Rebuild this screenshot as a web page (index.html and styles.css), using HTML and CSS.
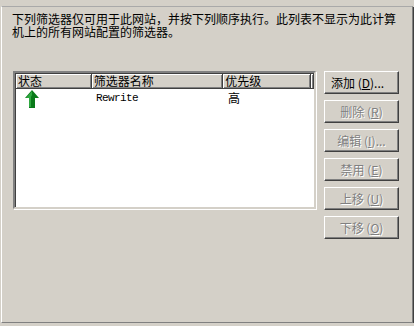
FILE: index.html
```html
<!DOCTYPE html>
<html lang="zh-CN">
<head>
    <meta charset="UTF-8">
    <title>ISAPI 筛选器</title>
    <link rel="stylesheet" href="styles.css">
</head>
<body>
    <div class="page">
        <p class="intro">下列筛选器仅可用于此网站，并按下列顺序执行。此列表不显示为此计算机上的所有网站配置的筛选器。</p>
        <div class="main">
            <div class="list">
                <div class="head">
                    <div class="col c1">状态</div>
                    <div class="col c2">筛选器名称</div>
                    <div class="col c3">优先级</div>
                    <div class="col c4"></div>
                </div>
                <div class="row">
                    <div class="cell c1">
                        <svg class="arrow" width="14" height="18" viewBox="0 0 14 18">
                            <path d="M7 0 L14 8 L10 8 L10 18 L4 18 L4 8 L0 8 Z" fill="#0a7a1a"/>
                            <path d="M7 1 L1 8 L4 8 L4 17 L6 17 L6 7 L7 5 Z" fill="#2fa840"/>
                        </svg>
                    </div>
                    <div class="cell c2 mono">Rewrite</div>
                    <div class="cell c3">高</div>
                </div>
            </div>
            <div class="buttons">
                <button class="btn">添加 (<u>D</u>)...</button>
                <button class="btn off">删除 (<u>R</u>)</button>
                <button class="btn off">编辑 (<u>I</u>)...</button>
                <button class="btn off">禁用 (<u>E</u>)</button>
                <button class="btn off">上移 (<u>U</u>)</button>
                <button class="btn off">下移 (<u>O</u>)</button>
            </div>
        </div>
    </div>
</body>
</html>
```

FILE: styles.css
```css
body {
    margin: 0;
    padding: 0;
    background: #d4d0c8;
    font-family: "Noto Sans CJK SC", sans-serif;
    font-size: 12px;
    color: #000;
}

.page {
    margin: 6px 0 0 1px;
    width: 410px;
    height: 315px;
    border: 1px solid;
    border-color: #a9a9a9 #808080 #808080 #ffffff;
    box-shadow: 1px 1px 0 #404040;
}

.intro {
    margin: 5px 10px 0 10px;
    line-height: 13px;
    font-size: 12px;
}

.main {
    display: flex;
    margin: 33px 0 0 11px;
}

.list {
    width: 299px;
    height: 134px;
    background: #fff;
    border: 2px solid;
    border-color: #808080 #d4d0c8 #d4d0c8 #808080;
    box-shadow: inset 1px 1px 0 #404040, 1px 1px 0 #fff;
}

.head {
    display: flex;
    height: 15px;
    margin: 1px 0 0 1px;
}

.col {
    box-sizing: border-box;
    height: 15px;
    line-height: 14px;
    padding-left: 2px;
    background: #d4d0c8;
    border-right: 1px solid #404040;
    border-bottom: 1px solid #404040;
    box-shadow: inset 1px 1px 0 #fff, inset -1px -1px 0 #808080;
}

.c1 { width: 76px; }
.c2 { width: 132px; }
.c3 { width: 88px; }
.c4 { flex: 1; }

.row {
    display: flex;
    height: 18px;
    margin-left: 1px;
}

.cell {
    box-sizing: border-box;
    padding-left: 4px;
    line-height: 18px;
}

.row .c1 {
    padding-left: 9px;
    padding-top: 1px;
}

.arrow {
    display: block;
}

.mono {
    font-family: "Liberation Mono", monospace;
    font-size: 11px;
    letter-spacing: -0.6px;
}

.buttons {
    display: flex;
    flex-direction: column;
    gap: 6px;
    margin-left: 8px;
}

.btn {
    box-sizing: border-box;
    width: 75px;
    height: 23px;
    padding: 0;
    font-family: "Noto Sans CJK SC", sans-serif;
    font-size: 12px;
    color: #000;
    background: #d4d0c8;
    border: 1px solid;
    border-color: #fff #404040 #404040 #fff;
    box-shadow: inset -1px -1px 0 #808080;
    text-align: left;
    padding-left: 6px;
}

.btn.off {
    color: #808080;
    text-shadow: 1px 1px 0 #fff;
    text-align: center;
    padding-left: 0;
}
```
